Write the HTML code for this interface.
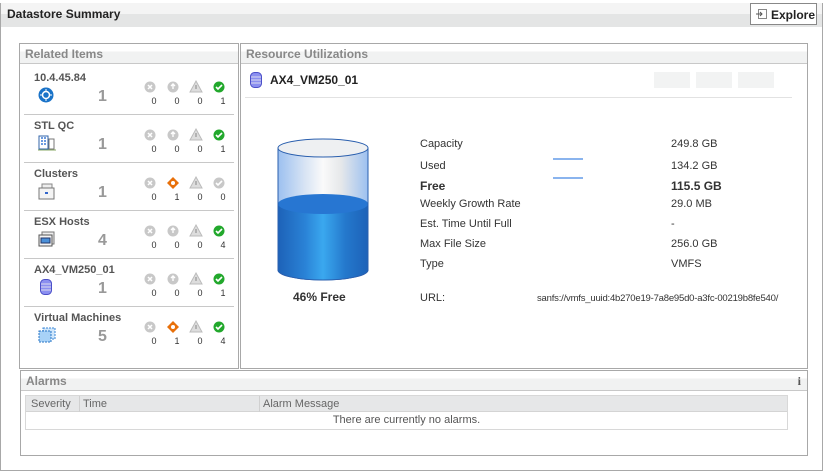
<!DOCTYPE html>
<html><head><meta charset="utf-8"><style>
*{margin:0;padding:0;box-sizing:border-box}
body{width:823px;height:472px;background:#fff;font-family:"Liberation Sans",sans-serif;font-size:11px;color:#333;position:relative;overflow:hidden}
.a{position:absolute}
.hdr{background:linear-gradient(#f4f4f4 0,#f4f4f4 45%,#e4e5e5 45%,#e4e5e5 100%)}
.ph{position:absolute;left:0;right:0;top:0;height:20px;border-bottom:1px solid #c8c8c8;background:linear-gradient(#fff 0,#fff 40%,#f1f2f2 40%);font-weight:bold;color:#888;font-size:12px;padding:3px 0 0 5px}
.sep{position:absolute;left:4px;width:210px;height:1px;background:#c8c8c8}
.t{position:absolute;left:14px;font-weight:bold;color:#555;font-size:11px}
.n{position:absolute;left:78px;font-size:16px;font-weight:bold;color:#999}
.lbl{position:absolute;left:420px;font-size:11px;color:#333}
.val{position:absolute;left:671px;font-size:11px;color:#333}
</style></head><body>
<div class="a" style="left:0;top:3px;width:823px;height:468px;border:1px solid #a8a8a8;border-top:none"></div>
<div class="a hdr" style="left:1px;top:3px;width:821px;height:24px;font-weight:bold;font-size:12px;color:#222;padding:4px 0 0 6px">Datastore Summary</div>
<div class="a" style="left:750px;top:3px;width:67px;height:22px;border:1px solid #888;background:#fff;font-weight:bold;font-size:12px;color:#222;padding:4px 0 0 20px">Explore
<svg class="a" style="left:5px;top:5px" width="11" height="11" viewBox="0 0 11 11"><rect x="2.5" y="0.5" width="8" height="9" fill="#fff" stroke="#888"/><path d="M0 5h6M4 3l2 2-2 2" stroke="#555" fill="none"/></svg></div>

<div class="a" style="left:19px;top:43px;width:220px;height:326px;border:1px solid #a8a8a8">
<div class="ph">Related Items</div>
</div>
<div class="a" style="left:20px;top:44px;width:218px;height:324px">
<div class="sep" style="top:70px"></div><div class="sep" style="top:118px"></div><div class="sep" style="top:166px"></div><div class="sep" style="top:214px"></div><div class="sep" style="top:262px"></div>
</div>

<div class="a" style="left:20px;top:66px;width:218px;height:300px">
<div class="t" style="top:6px">10.4.45.84</div>
<div class="t" style="top:54px">STL QC</div>
<div class="t" style="top:102px">Clusters</div>
<div class="t" style="top:150px">ESX Hosts</div>
<div class="t" style="top:198px">AX4_VM250_01</div>
<div class="t" style="top:246px">Virtual Machines</div>
<div class="n" style="top:22px">1</div><div class="n" style="top:70px">1</div><div class="n" style="top:118px">1</div><div class="n" style="top:166px">4</div><div class="n" style="top:214px">1</div><div class="n" style="top:262px">5</div>
<svg class="a" style="left:18px;top:21px" width="16" height="16"><circle cx="8" cy="8" r="7.5" fill="#1a73c8"/><circle cx="8" cy="8" r="3.5" fill="none" stroke="#fff" stroke-width="1.5"/><path d="M8 2v3M8 11v3M2 8h3M11 8h3" stroke="#fff"/></svg>
<svg class="a" style="left:18px;top:69px" width="18" height="16"><rect x="1" y="1" width="9" height="13" fill="#fff" stroke="#3366aa"/><path d="M3 3h2M6 3h2M3 6h2M6 6h2M3 9h2M6 9h2" stroke="#3b7ad6" stroke-width="1.5"/><rect x="11" y="4" width="5" height="10" fill="#fff" stroke="#777"/><path d="M0 15h18" stroke="#8a6"/></svg>
<svg class="a" style="left:18px;top:117px" width="17" height="17"><rect x="4" y="1" width="10" height="13" fill="#eee" stroke="#888"/><rect x="1" y="5" width="15" height="11" fill="#f4f4f4" stroke="#777"/><rect x="7" y="9" width="3" height="2" fill="#36c"/></svg>
<svg class="a" style="left:18px;top:165px" width="17" height="17"><rect x="4" y="1" width="12" height="12" fill="#eee" stroke="#777"/><rect x="1" y="4" width="13" height="11" fill="#f4f4f4" stroke="#555"/><rect x="3" y="7" width="9" height="5" fill="#4a90d9" stroke="#236"/></svg>
<svg class="a" style="left:20px;top:213px" width="12" height="16"><rect x="0.5" y="0.5" width="11" height="15" rx="4" fill="#8b8ff0" stroke="#4b4fc8"/><path d="M1 5h10M1 8h10M1 11h10" stroke="#dde"/></svg>
<svg class="a" style="left:18px;top:261px" width="18" height="16"><rect x="5" y="1" width="12" height="11" fill="#cfe6fb" stroke="#3a85d6" stroke-dasharray="2 1"/><rect x="1" y="4" width="12" height="11" fill="#a8d2f7" stroke="#2a75c6" stroke-dasharray="2 1"/></svg>
</div>

<svg class="a" style="left:140px;top:60px" width="90" height="290" font-family="Liberation Sans" font-size="9">
<defs>
<g id="x"><circle r="5.5" fill="#c8c8c8"/><path d="M-2 -2L2 2M2 -2L-2 2" stroke="#fff" stroke-width="1.5"/></g>
<g id="d"><circle r="5.5" fill="#c8c8c8"/><path d="M-2 -1L0 -3 2 -1M0 -3V2" stroke="#fff" stroke-width="1.4" fill="none"/></g>
<g id="o"><path d="M0 -6L6 0 0 6 -6 0Z" fill="#e8700a"/><circle r="2" fill="#fff"/></g>
<g id="w"><path d="M0 -6L6 5H-6Z" fill="#ddd" stroke="#bbb"/><path d="M0 -2V2" stroke="#888"/></g>
<g id="k"><circle r="5.5" fill="#22a82c"/><path d="M-3 0L-1 2 3 -2" stroke="#fff" stroke-width="1.6" fill="none"/></g>
<g id="kg"><circle r="5.5" fill="#c8c8c8"/><path d="M-3 0L-1 2 3 -2" stroke="#fff" stroke-width="1.6" fill="none"/></g>
</defs>
<use href="#x" x="10" y="27"/><use href="#d" x="33" y="27"/><use href="#w" x="56" y="27"/><use href="#k" x="79" y="27"/>
<use href="#x" x="10" y="75"/><use href="#d" x="33" y="75"/><use href="#w" x="56" y="75"/><use href="#k" x="79" y="75"/>
<use href="#x" x="10" y="123"/><use href="#o" x="33" y="123"/><use href="#w" x="56" y="123"/><use href="#kg" x="79" y="123"/>
<use href="#x" x="10" y="171"/><use href="#d" x="33" y="171"/><use href="#w" x="56" y="171"/><use href="#k" x="79" y="171"/>
<use href="#x" x="10" y="219"/><use href="#d" x="33" y="219"/><use href="#w" x="56" y="219"/><use href="#k" x="79" y="219"/>
<use href="#x" x="10" y="267"/><use href="#o" x="33" y="267"/><use href="#w" x="56" y="267"/><use href="#k" x="79" y="267"/>
<g fill="#333" text-anchor="middle">
<text x="14" y="44">0</text><text x="37" y="44">0</text><text x="60" y="44">0</text><text x="83" y="44">1</text>
<text x="14" y="92">0</text><text x="37" y="92">0</text><text x="60" y="92">0</text><text x="83" y="92">1</text>
<text x="14" y="140">0</text><text x="37" y="140">1</text><text x="60" y="140">0</text><text x="83" y="140">0</text>
<text x="14" y="188">0</text><text x="37" y="188">0</text><text x="60" y="188">0</text><text x="83" y="188">4</text>
<text x="14" y="236">0</text><text x="37" y="236">0</text><text x="60" y="236">0</text><text x="83" y="236">1</text>
<text x="14" y="284">0</text><text x="37" y="284">1</text><text x="60" y="284">0</text><text x="83" y="284">4</text>
</g></svg>

<div class="a" style="left:240px;top:43px;width:568px;height:326px;border:1px solid #a8a8a8">
<div class="ph">Resource Utilizations</div>
</div>
<svg class="a" style="left:250px;top:72px" width="12" height="16"><rect x="0.5" y="0.5" width="11" height="15" rx="4" fill="#8b8ff0" stroke="#4b4fc8"/><path d="M1 5h10M1 8h10M1 11h10" stroke="#dde"/></svg>
<div class="a" style="left:270px;top:73px;font-weight:bold;font-size:12px;color:#222">AX4_VM250_01</div>
<div class="a" style="left:654px;top:72px;width:36px;height:16px;background:#f2f3f3"></div>
<div class="a" style="left:696px;top:72px;width:36px;height:16px;background:#f2f3f3"></div>
<div class="a" style="left:738px;top:72px;width:36px;height:16px;background:#f2f3f3"></div>
<div class="a" style="left:245px;top:97px;width:547px;height:1px;background:#e2e2e2"></div>

<svg class="a" style="left:277px;top:138px" width="92" height="145">
<defs>
<linearGradient id="g1" x1="0" x2="1"><stop offset="0" stop-color="#9cc0f0"/><stop offset=".3" stop-color="#d8e4f4"/><stop offset=".5" stop-color="#fafafa"/><stop offset=".7" stop-color="#e6e8ea"/><stop offset="1" stop-color="#9cc0f0"/></linearGradient>
<linearGradient id="g2" x1="0" x2="1"><stop offset="0" stop-color="#1d62b8"/><stop offset=".3" stop-color="#2a82d6"/><stop offset=".5" stop-color="#3aa8ef"/><stop offset=".75" stop-color="#2478cc"/><stop offset="1" stop-color="#1d62b8"/></linearGradient>
</defs>
<path d="M1 10V132A45 10 0 0 0 91 132V10Z" fill="url(#g1)" stroke="#2a5fae"/>
<path d="M1 66V132A45 10 0 0 0 91 132V66Z" fill="url(#g2)"/>
<ellipse cx="46" cy="66" rx="45" ry="10" fill="#2776d2"/>
<ellipse cx="46" cy="10" rx="45" ry="9" fill="#eef0f2" stroke="#2a5fae"/>
<path d="M1 10V132A45 10 0 0 0 91 132V10" fill="none" stroke="#2a5fae"/>
</svg>
<div class="a" style="left:293px;top:290px;font-weight:bold;font-size:12px;color:#333">46% Free</div>

<div class="lbl" style="top:138px">Capacity</div><div class="val" style="top:138px">249.8 GB</div>
<div class="lbl" style="top:160px">Used</div><div class="val" style="top:160px">134.2 GB</div>
<div class="lbl" style="top:179px;font-weight:bold;font-size:12px">Free</div><div class="val" style="top:179px;font-weight:bold;font-size:12px">115.5 GB</div>
<div class="lbl" style="top:198px">Weekly Growth Rate</div><div class="val" style="top:198px">29.0 MB</div>
<div class="lbl" style="top:218px">Est. Time Until Full</div><div class="val" style="top:218px">-</div>
<div class="lbl" style="top:238px">Max File Size</div><div class="val" style="top:238px">256.0 GB</div>
<div class="lbl" style="top:258px">Type</div><div class="val" style="top:258px">VMFS</div>
<div class="lbl" style="top:292px">URL:</div>
<div class="a" style="left:537px;top:293px;font-size:9.5px;color:#333;letter-spacing:-0.2px">sanfs://vmfs_uuid:4b270e19-7a8e95d0-a3fc-00219b8fe540/</div>
<div class="a" style="left:553px;top:158px;width:30px;height:2px;background:#8ab4ee"></div>
<div class="a" style="left:553px;top:177px;width:30px;height:2px;background:#8ab4ee"></div>

<div class="a" style="left:20px;top:370px;width:788px;height:86px;border:1px solid #a8a8a8">
<div class="ph">Alarms</div>
<div class="a" style="right:6px;top:3px;font-weight:bold;color:#555;font-family:'Liberation Serif',serif;font-size:12px">i</div>
<div class="a" style="left:4px;top:24px;width:763px;height:35px;border:1px solid #d8d8d8">
<div class="a" style="left:0;top:0;width:761px;height:16px;background:#e6e7e8;border-bottom:1px solid #d4d4d4;color:#666;font-size:11px">
<span class="a" style="left:5px;top:2px">Severity</span><span class="a" style="left:53px;top:0;height:16px;border-left:1px solid #d0d0d0;padding:2px 3px">Time</span><span class="a" style="left:233px;top:0;height:16px;border-left:1px solid #d0d0d0;padding:2px 3px">Alarm Message</span></div>
<div class="a" style="left:0;top:18px;width:761px;text-align:center;color:#555;font-size:11px">There are currently no alarms.</div>
</div>
</div>
</body></html>
